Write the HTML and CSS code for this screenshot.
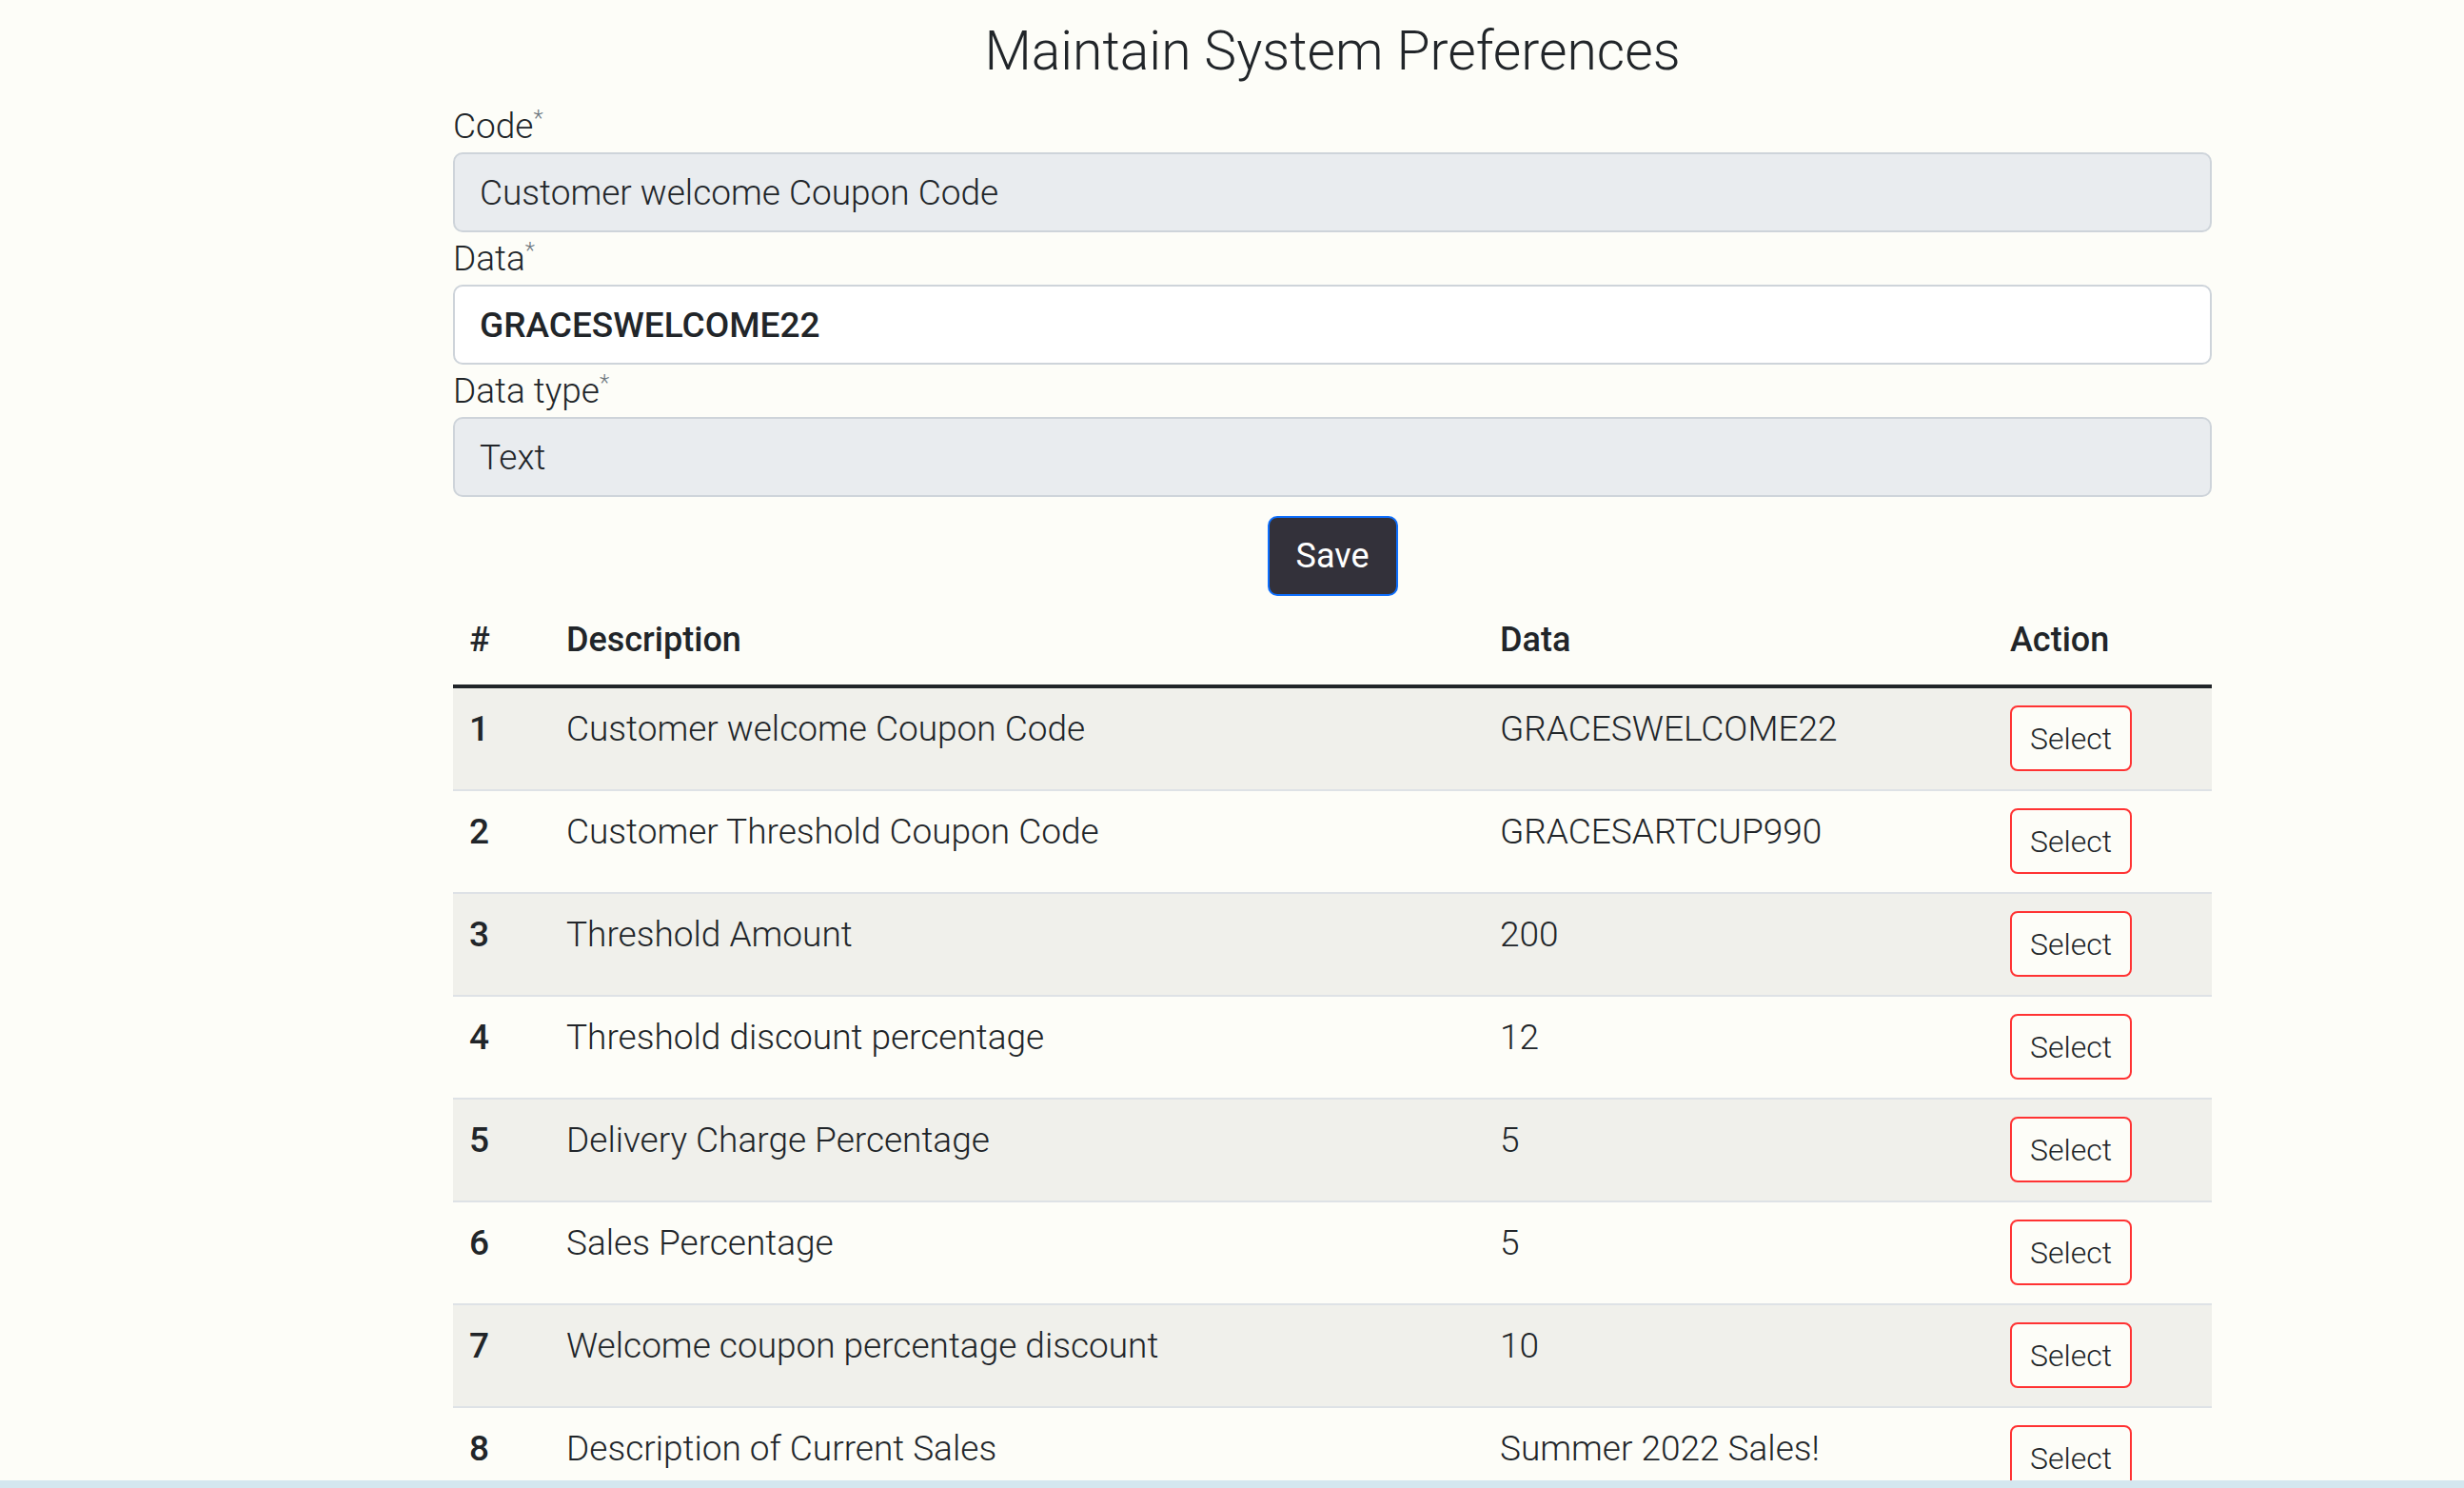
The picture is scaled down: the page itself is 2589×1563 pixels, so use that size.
FILE: index.html
```html
<!DOCTYPE html>
<html lang="en">
<head>
<meta charset="utf-8">
<title>Maintain System Preferences</title>
<link rel="stylesheet" href="styles.css">
</head>
<body>
<div class="layout">
  <aside class="sidebar"></aside>
  <main class="main">
    <div class="container">
      <h1 class="title">Maintain System Preferences</h1>
      <form class="pref-form">
        <div class="field">
          <label class="field-label">Code<sup class="req">*</sup></label>
          <input class="field-input is-readonly" value="Customer welcome Coupon Code" readonly>
        </div>
        <div class="field">
          <label class="field-label">Data<sup class="req">*</sup></label>
          <input class="field-input is-strong" value="GRACESWELCOME22">
        </div>
        <div class="field">
          <label class="field-label">Data type<sup class="req">*</sup></label>
          <input class="field-input is-readonly" value="Text" readonly>
        </div>
        <div class="actions">
          <button type="button" class="btn-save">Save</button>
        </div>
      </form>
      <table class="pref-table">
        <colgroup>
          <col class="col-num"><col class="col-desc"><col class="col-data"><col class="col-action">
        </colgroup>
        <thead>
          <tr><th>#</th><th>Description</th><th>Data</th><th>Action</th></tr>
        </thead>
        <tbody>
          <tr><th>1</th><td>Customer welcome Coupon Code</td><td>GRACESWELCOME22</td><td><button type="button" class="btn-select">Select</button></td></tr>
          <tr><th>2</th><td>Customer Threshold Coupon Code</td><td>GRACESARTCUP990</td><td><button type="button" class="btn-select">Select</button></td></tr>
          <tr><th>3</th><td>Threshold Amount</td><td>200</td><td><button type="button" class="btn-select">Select</button></td></tr>
          <tr><th>4</th><td>Threshold discount percentage</td><td>12</td><td><button type="button" class="btn-select">Select</button></td></tr>
          <tr><th>5</th><td>Delivery Charge Percentage</td><td>5</td><td><button type="button" class="btn-select">Select</button></td></tr>
          <tr><th>6</th><td>Sales Percentage</td><td>5</td><td><button type="button" class="btn-select">Select</button></td></tr>
          <tr><th>7</th><td>Welcome coupon percentage discount</td><td>10</td><td><button type="button" class="btn-select">Select</button></td></tr>
          <tr><th>8</th><td>Description of Current Sales</td><td>Summer 2022 Sales!</td><td><button type="button" class="btn-select">Select</button></td></tr>
        </tbody>
      </table>
    </div>
  </main>
</div>
<div class="footer-strip"></div>
</body>
</html>
```

FILE: styles.css
```css
html {
  scrollbar-width: none;
}
html::-webkit-scrollbar {
  display: none;
}
body {
  margin: 0;
  background: #fdfdf8;
  color: #212529;
  font-family: Roboto, "Open Sans", sans-serif;
  font-weight: 300;
}
.layout {
  display: grid;
  grid-template-columns: 211px 1fr;
}
.container {
  width: 1848px;
  margin: 0 auto;
}
.title {
  margin: 19px 0;
  font-size: 57px;
  line-height: 70px;
  font-weight: 300;
  text-align: center;
}
.field-label {
  display: block;
  font-size: 37px;
  line-height: 50px;
  margin-bottom: 2px;
}
.req {
  font-size: 24px;
  line-height: 0;
  font-weight: 300;
  color: #6c757d;
  vertical-align: 13px;
}
.field-input {
  display: block;
  width: 100%;
  height: 84px;
  box-sizing: border-box;
  margin: 0 0 3px;
  padding: 0 26px;
  border: 2px solid #ced4da;
  border-radius: 10px;
  background: #fff;
  color: #212529;
  font-family: Roboto, "Open Sans", sans-serif;
  font-size: 37px;
  font-weight: 300;
  outline: none;
}
.field-input.is-readonly {
  background: #e9ecef;
}
.field-input.is-strong {
  font-weight: 500;
}
.actions {
  margin-top: 20px;
  text-align: center;
}
.btn-save {
  padding: 13px 28px;
  border: 2px solid #0d6efd;
  border-radius: 10px;
  background: #33313a;
  color: #fff;
  font-family: Roboto, "Open Sans", sans-serif;
  font-size: 36px;
  line-height: 54px;
  font-weight: 400;
}
.pref-table {
  width: 100%;
  margin-top: 11px;
  table-layout: fixed;
  border-collapse: separate;
  border-spacing: 0;
  font-size: 37px;
}
.col-num { width: 102px; }
.col-desc { width: 981px; }
.col-data { width: 536px; }
.col-action { width: 229px; }
.pref-table thead th {
  padding: 10px 17px 22px;
  font-size: 36px;
  line-height: 50px;
  font-weight: 500;
  text-align: left;
  border-bottom: 4px solid #212529;
}
.pref-table tbody th,
.pref-table tbody td {
  padding: 18px 17px 19px;
  line-height: 50px;
  vertical-align: top;
  text-align: left;
  border-bottom: 2px solid #dee2e6;
}
.pref-table tbody th {
  font-weight: 500;
}
.pref-table tbody td {
  font-weight: 300;
}
.pref-table tbody tr:nth-child(odd) {
  background: #f0f0eb;
}
.btn-select {
  display: block;
  width: 128px;
  height: 69px;
  box-sizing: border-box;
  padding: 0;
  border: 2px solid #ff3333;
  border-radius: 8px;
  background: #fdfdf8;
  color: #212529;
  font-family: Roboto, "Open Sans", sans-serif;
  font-size: 32px;
  font-weight: 300;
}
.footer-strip {
  position: fixed;
  left: 0;
  right: 0;
  bottom: 0;
  height: 8px;
  background: #d4e7ef;
}
```
